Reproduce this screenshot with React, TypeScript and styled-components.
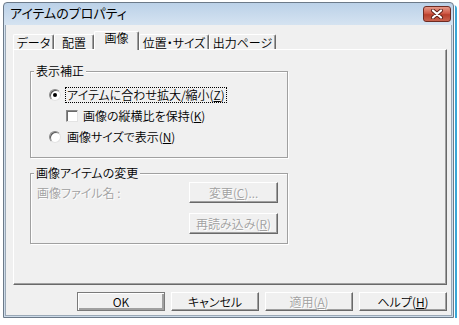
import React from "react";
import styled, { createGlobalStyle } from "styled-components";

const GlobalStyle = createGlobalStyle`
  body {
    margin: 0;
    background: #fff;
    font-family: "Noto Sans CJK JP", "Noto Sans", sans-serif;
    font-size: 12px;
    font-weight: 350;
    font-feature-settings: "palt";
    color: #000;
  }
`;

const Window = styled.div`
  margin: 2px 0 0 3px;
  width: 451px;
  box-sizing: border-box;
  border: 1px solid #6c7a89;
  border-radius: 4px 4px 0 0;
  background: linear-gradient(#bbd1e8, #d5e3f1 22px, #cddbe9);
  padding: 0 1px 1px;
  box-shadow: 1px 1px 0 #fff, 3px 3px 0 #3aa6d6;
`;

const TitleBar = styled.div`
  height: 22px;
  display: flex;
  align-items: flex-start;
  justify-content: space-between;
  padding-left: 5px;
`;

const Title = styled.div`
  font-size: 13px;
  font-weight: 400;
  line-height: 20px;
`;

const CloseButton = styled.div`
  margin: 3px 1px 0 0;
  width: 28px;
  height: 16px;
  box-sizing: border-box;
  border: 1px solid #6e2b22;
  border-radius: 3px;
  background: linear-gradient(#e59a8a, #d05a47 45%, #b8402c 55%, #c9624e);
  display: flex;
  align-items: center;
  justify-content: center;
`;

const Client = styled.div`
  background: #f0f0f0;
  border: 1px solid #9aa8b6;
  border-top: none;
  padding: 6px 4px 4px 7px;
`;

const TabStrip = styled.div`
  display: flex;
  align-items: flex-end;
  height: 18px;
  position: relative;
  z-index: 1;
`;

const Tab = styled.div<{ $active?: boolean; $width: number }>`
  width: ${(p) => p.$width}px;
  height: ${(p) => (p.$active ? 19 : 15)}px;
  margin-bottom: ${(p) => (p.$active ? -1 : 0)}px;
  padding-top: ${(p) => (p.$active ? 0 : 1)}px;
  box-sizing: border-box;
  border-top: 1px solid #fff;
  border-left: 1px solid #fff;
  border-right: 1px solid #696969;
  box-shadow: inset -1px 0 0 #a0a0a0;
  border-radius: 2px 2px 0 0;
  background: #f0f0f0;
  line-height: ${(p) => (p.$active ? 12 : 14)}px;
  text-align: center;
  white-space: nowrap;
`;

const Panel = styled.div`
  height: 236px;
  box-sizing: border-box;
  border: 1px solid;
  border-color: #fff #696969 #696969 #fff;
  box-shadow: inset -1px -1px 0 #a0a0a0;
  padding: 21px 0 0 16px;
`;

const GroupBox = styled.div<{ $height: number }>`
  position: relative;
  width: 258px;
  height: ${(p) => p.$height}px;
  box-sizing: border-box;
  border: 1px solid #a0a0a0;
  box-shadow: inset 1px 1px 0 #fff, 1px 1px 0 #fff;
  & + & {
    margin-top: 15px;
  }
`;

const Legend = styled.div`
  position: absolute;
  top: -8px;
  left: 3px;
  padding: 0 2px;
  background: #f0f0f0;
  line-height: 14px;
`;

const Options = styled.div`
  padding: 12px 0 0 18px;
`;

const OptionRow = styled.div<{ $indent?: number }>`
  height: 21px;
  display: flex;
  align-items: center;
  gap: ${(p) => (p.$indent ? 4 : 5)}px;
  margin-left: ${(p) => p.$indent ?? 0}px;
`;

const Radio = styled.span<{ $checked?: boolean }>`
  width: 12px;
  height: 12px;
  box-sizing: border-box;
  border-radius: 50%;
  border: 1px solid;
  border-color: #8a8a8a #e3e3e3 #e3e3e3 #8a8a8a;
  box-shadow: inset 1px 1px 0 #5a5a5a;
  background: #fff;
  display: flex;
  align-items: center;
  justify-content: center;
  &::after {
    content: "";
    width: 4px;
    height: 4px;
    border-radius: 50%;
    background: ${(p) => (p.$checked ? "#000" : "transparent")};
  }
`;

const Checkbox = styled.span`
  width: 12px;
  height: 12px;
  box-sizing: border-box;
  border: 1px solid;
  border-color: #8a8a8a #e3e3e3 #e3e3e3 #8a8a8a;
  box-shadow: inset 1px 1px 0 #6a6a6a;
  background: #fff;
`;

const Label = styled.span<{ $focused?: boolean; $disabled?: boolean }>`
  line-height: 14px;
  padding: 0 1px;
  white-space: nowrap;
  outline: ${(p) => (p.$focused ? "1px dotted #000" : "none")};
  color: ${(p) => (p.$disabled ? "#a0a0a0" : "#000")};
  text-shadow: ${(p) => (p.$disabled ? "1px 1px 0 #fff" : "none")};
`;

const U = styled.span`
  text-decoration: underline;
`;

const FileGrid = styled.div`
  display: grid;
  grid-template-columns: 1fr 89px;
  grid-template-rows: 21px 21px;
  row-gap: 10px;
  align-items: center;
  padding: 8px 9px 0 5px;
`;

const Button = styled.div<{ $width?: number; $height?: number; $disabled?: boolean; $default?: boolean }>`
  width: ${(p) => p.$width ?? 89}px;
  height: ${(p) => p.$height ?? 21}px;
  box-sizing: border-box;
  background: #f0f0f0;
  border: 1px solid;
  border-color: ${(p) => (p.$default ? "#7a7a7a" : "#fff #696969 #696969 #fff")};
  box-shadow: ${(p) =>
    p.$default ? "inset 1px 1px 0 #fff, inset -2px -2px 0 #a0a0a0" : "inset -1px -1px 0 #a0a0a0"};
  display: flex;
  align-items: center;
  justify-content: center;
  line-height: 14px;
  white-space: nowrap;
  color: ${(p) => (p.$disabled ? "#a0a0a0" : "#000")};
  text-shadow: ${(p) => (p.$disabled ? "1px 1px 0 #fff" : "none")};
`;

const ButtonRow = styled.div`
  display: flex;
  justify-content: flex-end;
  gap: 6px;
  margin-top: 7px;
`;

const CloseIcon = () => (
  <svg width="14" height="10" viewBox="0 0 14 10">
    <path d="M3 1.5 L11 8.5 M11 1.5 L3 8.5" stroke="#5b1f17" strokeWidth="4" strokeLinecap="round" />
    <path d="M3 1.5 L11 8.5 M11 1.5 L3 8.5" stroke="#fff" strokeWidth="2.2" strokeLinecap="round" />
  </svg>
);

const tabs = [
  { label: "データ", width: 41 },
  { label: "配置", width: 40 },
  { label: "画像", width: 45, active: true },
  { label: "位置・サイズ", width: 70 },
  { label: "出力ページ", width: 67 },
];

export default function App() {
  return (
    <>
      <GlobalStyle />
      <Window>
        <TitleBar>
          <Title>アイテムのプロパティ</Title>
          <CloseButton>
            <CloseIcon />
          </CloseButton>
        </TitleBar>
        <Client>
          <TabStrip>
            {tabs.map((t) => (
              <Tab key={t.label} $active={t.active} $width={t.width}>
                {t.label}
              </Tab>
            ))}
          </TabStrip>
          <Panel>
            <GroupBox $height={87}>
              <Legend>表示補正</Legend>
              <Options>
                <OptionRow>
                  <Radio $checked />
                  <Label $focused>
                    アイテムに合わせ拡大/縮小(<U>Z</U>)
                  </Label>
                </OptionRow>
                <OptionRow $indent={17}>
                  <Checkbox />
                  <Label>
                    画像の縦横比を保持(<U>K</U>)
                  </Label>
                </OptionRow>
                <OptionRow>
                  <Radio />
                  <Label>
                    画像サイズで表示(<U>N</U>)
                  </Label>
                </OptionRow>
              </Options>
            </GroupBox>
            <GroupBox $height={71}>
              <Legend>画像アイテムの変更</Legend>
              <FileGrid>
                <Label $disabled>画像ファイル名 :</Label>
                <Button $disabled>
                  変更(<U>C</U>)...
                </Button>
                <span />
                <Button $disabled>
                  再読み込み(<U>R</U>)
                </Button>
              </FileGrid>
            </GroupBox>
          </Panel>
          <ButtonRow>
            <Button $width={88} $height={19} $default>
              OK
            </Button>
            <Button $width={88} $height={19}>
              キャンセル
            </Button>
            <Button $width={88} $height={19} $disabled>
              適用(<U>A</U>)
            </Button>
            <Button $width={88} $height={19}>
              ヘルプ(<U>H</U>)
            </Button>
          </ButtonRow>
        </Client>
      </Window>
    </>
  );
}
